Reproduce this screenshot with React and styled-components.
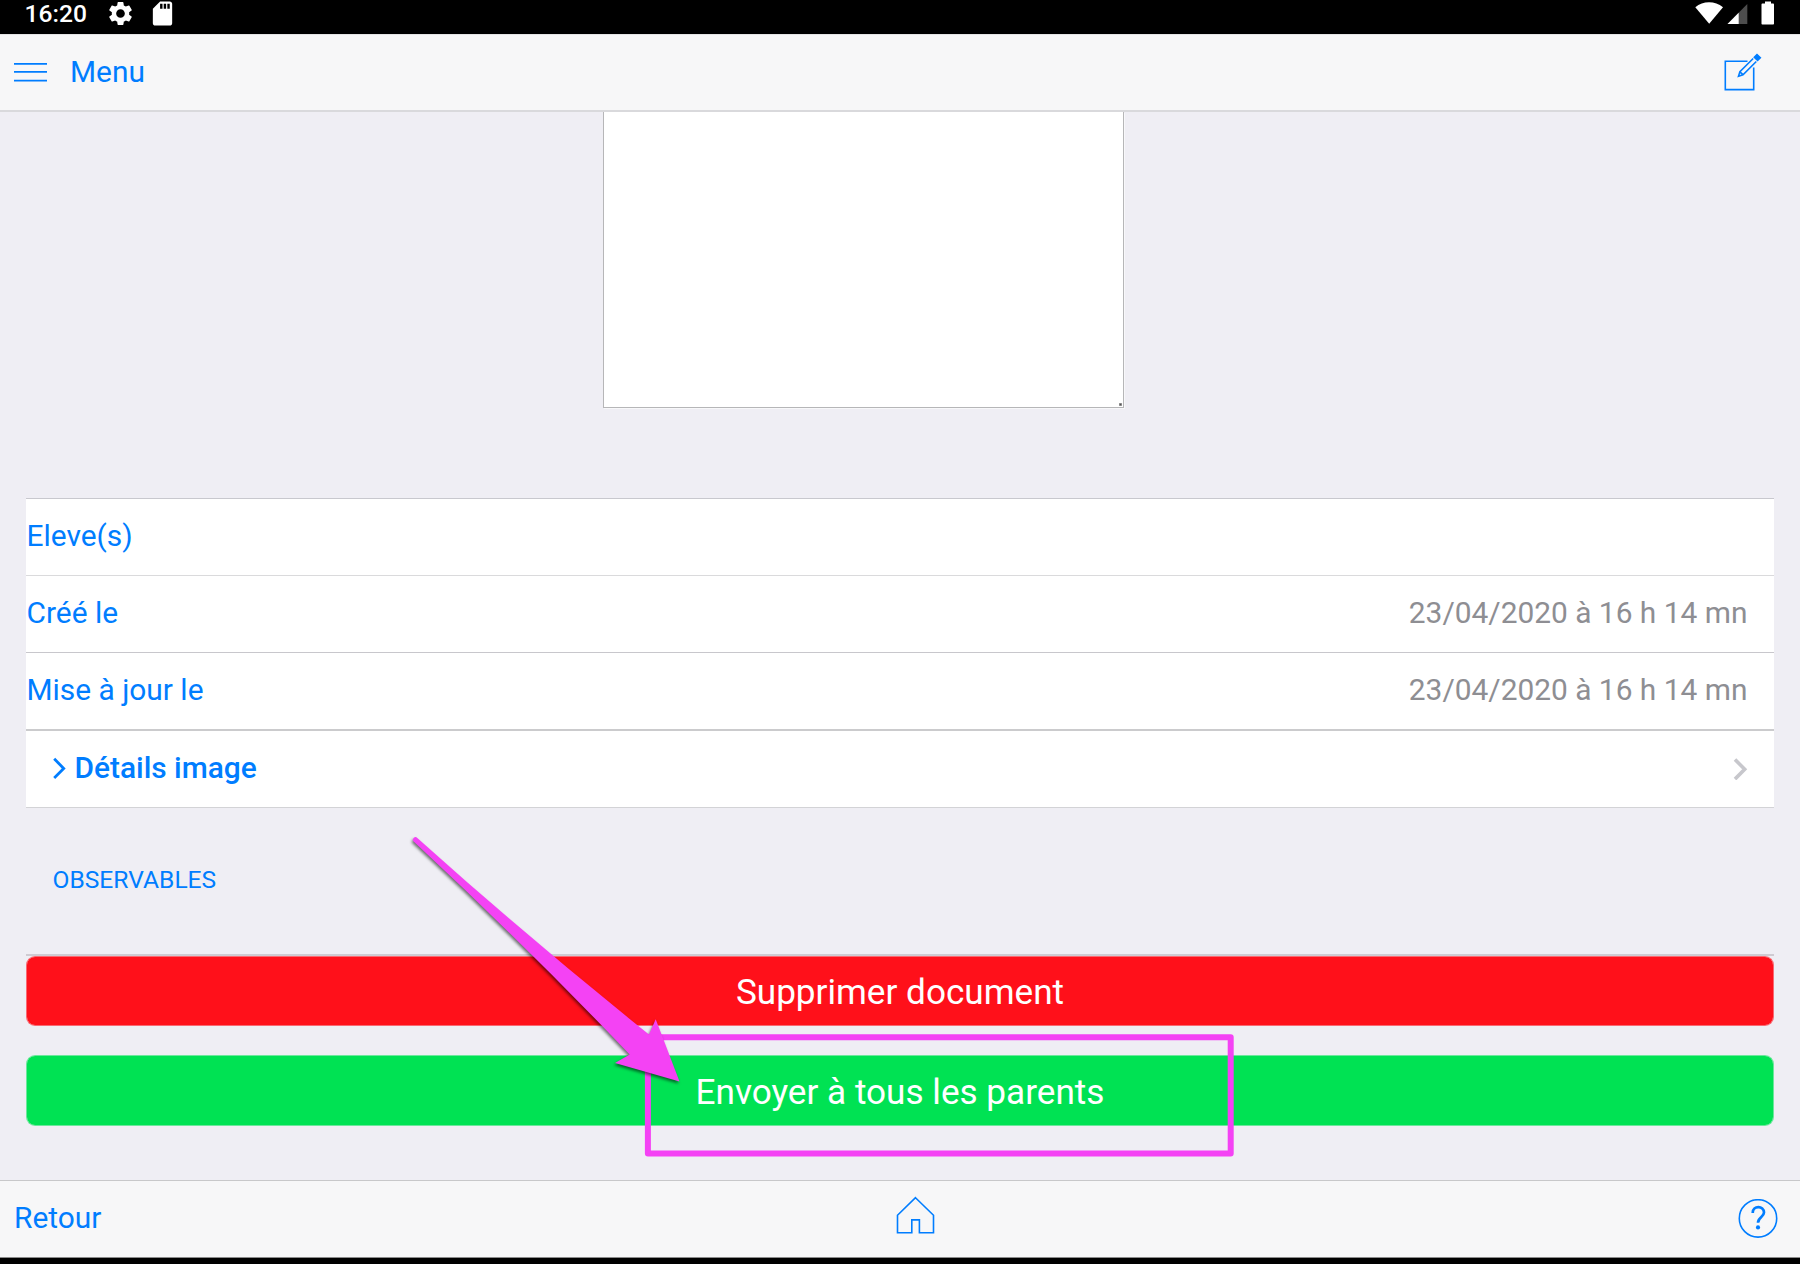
import React from "react";
import styled, { createGlobalStyle } from "styled-components";
import { MdSettings, MdSdCard } from "react-icons/md";

const BLUE = "#007dff";
const PINK = "#f442f4";

const GlobalStyle = createGlobalStyle`
  body { margin: 0; background: #efeff4; }
  * { box-sizing: border-box; }
`;

const Screen = styled.div`
  position: relative;
  display: flex;
  flex-direction: column;
  width: 1800px;
  height: 1264px;
  overflow: hidden;
  background: #efeef4;
  color: ${BLUE};
  font-family: Roboto, "Liberation Sans", sans-serif;
  font-size: 29.88px;
  svg { display: block; flex: none; }
`;

const StatusBar = styled.div`
  display: flex;
  justify-content: space-between;
  height: 34px;
  background: #000;
  color: #fff;
`;

const StatusLeft = styled.div`
  display: flex;
  padding-left: 24.5px;
`;

const Clock = styled.span`
  width: 81px;
  font-size: 24.6px;
  font-weight: 500;
  line-height: 28px;
`;

const StatusIcon = styled.span`
  display: flex;
  margin: -1.5px 13.5px 0 0;
`;

const Bar = styled.div`
  display: flex;
  align-items: center;
  justify-content: space-between;
  background: #f7f7f8;
`;

const Navbar = styled(Bar)`
  height: 78px;
  border-top: 1px solid #e4e4e5;
  border-bottom: 2px solid #d9d9dc;
  padding: 0 38px 1px 14px;
`;

const Toolbar = styled(Bar)`
  height: 78px;
  border-top: 1px solid #c8c8ca;
  border-bottom: 1px solid #8b8b8b;
  padding: 0 22px 0 14px;
`;

const MenuLink = styled.a`
  display: flex;
  align-items: center;
  gap: 23px;
`;

const Label = styled.span`
  line-height: 36px;
  white-space: nowrap;
  transform: translateY(${(p) => p.$shift || 0}px);
`;

const HomeLink = styled.a`
  margin: 0 10px 6px 0;
`;

const Content = styled.main`
  flex: none;
  height: 1068px;
  padding: 0 26px;
`;

const NoteField = styled.div`
  display: flex;
  align-items: flex-end;
  justify-content: flex-end;
  width: 521px;
  height: 296px;
  margin-left: 577px;
  background: #fff;
  border: 1px solid #b6b6b8;
  border-top: 0;
  box-shadow: 1px 1px 0 #f8f8fa;
`;

const Grip = styled.i`
  width: 3px;
  height: 3px;
  margin: 0 1px 1px 0;
  background: radial-gradient(#555, #bbb);
`;

const List = styled.div`
  margin-top: 90px;
  background: #fff;
  border-top: 1px solid #c8c8ce;
`;

const Row = styled.div`
  display: flex;
  align-items: center;
  justify-content: space-between;
  height: ${(p) => p.$height || 77}px;
  padding: 0 26px 2px ${(p) => p.$inset || 0.5}px;
  border-bottom: ${(p) => p.$rule || 1}px solid ${(p) => p.$line || "#c8c7cc"};
`;

const Value = styled(Label)`
  margin-right: 0.6px;
  color: #8e8e93;
`;

const Details = styled.span`
  display: flex;
  align-items: center;
  gap: 9px;
  font-weight: 500;
`;

const GroupTitle = styled.div`
  height: 146px;
  padding: 57px 0 0 26.5px;
  font-size: 24.6px;
  line-height: 30px;
  text-transform: uppercase;
`;

const Actions = styled.div`
  display: flex;
  flex-direction: column;
  gap: 29px;
  border-top: 2px solid #cfcbd2;
`;

const Action = styled.button`
  height: ${(p) => p.$height}px;
  padding: 2px 0 0;
  border: 1px solid ${(p) => p.$edge};
  border-radius: 9px;
  background: ${(p) => p.$fill};
  background-clip: padding-box;
  color: #fff;
  font-family: inherit;
  font-size: 35.15px;
  line-height: 40px;
`;

const SystemBar = styled.div`
  height: 6px;
  background: #000;
`;

const Annotation = styled.svg`
  position: absolute;
  left: 400px;
  top: 820px;
  pointer-events: none;
`;

const Arrow = styled.path`
  fill: ${PINK};
  filter: drop-shadow(-1px 2px 1.5px rgba(0, 0, 0, 0.55));
`;

export default function App() {
  return (
    <Screen>
      <GlobalStyle />
      <StatusBar>
        <StatusLeft>
          <Clock>16:20</Clock>
          <StatusIcon><MdSettings size={29} /></StatusIcon>
          <StatusIcon><MdSdCard size={29} /></StatusIcon>
        </StatusLeft>
        <svg width="110" height="34" viewBox="1690 0 110 34">
          <path d="M1695.3 7.2C1703 .6 1715 .6 1723 7.2L1709.2 23.7Z" fill="#fff" />
          <path d="M1727.5 24L1747.3 4V24Z" fill="#4d4d4d" />
          <path d="M1727.5 24L1738.7 12.7V24Z" fill="#fff" />
          <path d="M1765 1.4h6v2.2h2.2c.5 0 .8.3.8.8v19.3c0 .5-.3.8-.8.8h-10.9c-.5 0-.8-.3-.8-.8V4.4c0-.5.3-.8.8-.8H1765Z" fill="#fff" />
        </svg>
      </StatusBar>
      <Navbar>
        <MenuLink>
          <svg width="33" height="20" viewBox="0 0 33 20" stroke={BLUE} strokeWidth="1.8">
            <path d="M0 1.9H33M0 9.9H33M0 18.7H33" />
          </svg>
          <Label>Menu</Label>
        </MenuLink>
        <svg width="38" height="38" viewBox="1724 53 38 38" fill="none" stroke={BLUE} strokeWidth="1.6">
          <path d="M1747.5 61.3H1725.3V89.6H1753.7V67.5" />
          <path d="M1753.2 58.5L1739.9 71.8L1738.5 76.2L1743 74.7L1756.3 61.5M1739.9 71.8L1743 74.7" />
          <path d="M1754.3 57.3L1757 54.6L1760.3 57.7L1757.6 60.4Z" fill={BLUE} />
        </svg>
      </Navbar>
      <Content>
        <NoteField><Grip /></NoteField>
        <List>
          <Row $line="#dadadc"><Label>Eleve(s)</Label></Row>
          <Row><Label>Créé le</Label><Value>23/04/2020 à 16 h 14 mn</Value></Row>
          <Row $height={78} $rule={2} $line="#cbcbcd"><Label>Mise à jour le</Label><Value>23/04/2020 à 16 h 14 mn</Value></Row>
          <Row $inset={26.5} $line="#d3d3d6">
            <Details>
              <svg width="13" height="22" viewBox="0 0 13 22" fill="none" stroke={BLUE} strokeWidth="2.8">
                <path d="M1.2 1.8L10.700 11.4L1.2 21" />
              </svg>
              <Label>Détails image</Label>
            </Details>
            <svg width="15" height="24" viewBox="0 0 15 24" fill="none" stroke="#c7c7cc" strokeWidth="3.6">
              <path d="M2 3.5L11.7 13.3L2 23.1" />
            </svg>
          </Row>
        </List>
        <GroupTitle>Observables</GroupTitle>
        <Actions>
          <Action $height={70} $fill="#ff101a" $edge="rgba(255,16,26,.6)">Supprimer document</Action>
          <Action $height={71} $fill="#00e253" $edge="rgba(0,226,83,.55)">Envoyer à tous les parents</Action>
        </Actions>
      </Content>
      <Toolbar>
        <Label $shift={-1}>Retour</Label>
        <HomeLink>
          <svg width="40" height="40" viewBox="895 1196 40 40" fill="none" stroke={BLUE} strokeWidth="1.6">
            <path d="M915.5 1197.7L933.5 1215.3V1232.7H919.4V1219.9H911.8V1232.7H897.5V1215.3Z" />
          </svg>
        </HomeLink>
        <svg width="40" height="40" viewBox="0 0 40 40" fill="none" stroke={BLUE}>
          <circle cx="20" cy="19.4" r="18.7" strokeWidth="1.6" />
          <path d="M14.7 13.9C14.7 6.3 26 6.3 26 13.6C26 17.8 20 18.2 20 23.7" strokeWidth="2.7" />
          <circle cx="20" cy="28.4" r="2.1" fill={BLUE} stroke="none" />
        </svg>
      </Toolbar>
      <SystemBar />
      <Annotation width="850" height="350" viewBox="400 820 850 350">
        <rect x="647.9" y="1037.3" width="582.8" height="116.2" fill="none" stroke={PINK} strokeWidth="6" strokeLinejoin="round" />
        <Arrow d="M417.3 838Q532 941 649 1034.5L655.7 1019.3L679.5 1081.4L615 1063L629.7 1054.5Q524 944 413.7 841.6A2.5 2.5 0 0 1 417.3 838Z" />
      </Annotation>
    </Screen>
  );
}
